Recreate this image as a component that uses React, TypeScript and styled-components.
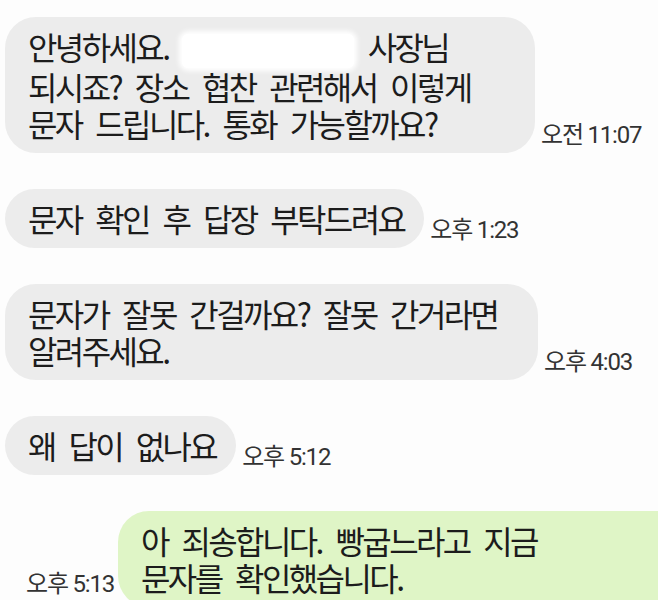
import React from "react";
import styled, { createGlobalStyle } from "styled-components";

const Global = createGlobalStyle`
  html, body { margin: 0; padding: 0; background: #fdfdfd; overflow: hidden; }
  body { font-family: "Noto Sans CJK KR", "Noto Sans", sans-serif; }
`;

const Thread = styled.div`
  display: flex;
  flex-direction: column;
  gap: 36px;
  padding: 17px 0 0 5px;
  width: 658px;
  height: 600px;
  box-sizing: border-box;
  overflow: hidden;
`;

const Row = styled.div<{ $sent?: boolean }>`
  display: flex;
  align-items: flex-end;
  justify-content: ${(p) => (p.$sent ? "flex-end" : "flex-start")};
  margin-right: ${(p) => (p.$sent ? "-40px" : "0")};
`;

const Bubble = styled.div<{ $sent?: boolean; $width?: number }>`
  background: ${(p) => (p.$sent ? "#dff5c6" : "#ececec")};
  color: #1c1c1c;
  border-radius: 31px;
  padding: 11px 20px 11px 23px;
  width: ${(p) => (p.$width ? `${p.$width}px` : "auto")};
  box-sizing: border-box;
  font-size: 32px;
  font-weight: 400;
  line-height: 37px;
  letter-spacing: -2.6px;
  word-spacing: 9px;
  white-space: nowrap;
  flex-shrink: 0;
`;

const Time = styled.span<{ $sent?: boolean }>`
  font-family: "Roboto", "Noto Sans CJK KR", sans-serif;
  font-size: 24px;
  color: #333333;
  letter-spacing: -1.2px;
  white-space: nowrap;
  margin: ${(p) => (p.$sent ? "0 4px 8px 0" : "0 0 3px 6px")};
  flex-shrink: 0;
`;

const Redact = styled.span`
  display: inline-block;
  width: 172px;
  height: 34px;
  vertical-align: -8px;
  background: #ffffff;
  border-radius: 6px;
  box-shadow: 0 0 5px 3px #ffffff;
`;

export default function App() {
  return (
    <>
      <Global />
      <Thread>
        <Row>
          <Bubble $width={530}>
            안녕하세요. <Redact /> 사장님
            <br />
            되시죠? 장소 협찬 관련해서 이렇게
            <br />
            문자 드립니다. 통화 가능할까요?
          </Bubble>
          <Time>오전 11:07</Time>
        </Row>
        <Row>
          <Bubble>문자 확인 후 답장 부탁드려요</Bubble>
          <Time>오후 1:23</Time>
        </Row>
        <Row>
          <Bubble $width={533}>
            문자가 잘못 간걸까요? 잘못 간거라면
            <br />
            알려주세요.
          </Bubble>
          <Time>오후 4:03</Time>
        </Row>
        <Row>
          <Bubble>왜 답이 없나요</Bubble>
          <Time>오후 5:12</Time>
        </Row>
        <Row $sent>
          <Time $sent>오후 5:13</Time>
          <Bubble $sent $width={580}>
            아 죄송합니다. 빵굽느라고 지금
            <br />
            문자를 확인했습니다.
          </Bubble>
        </Row>
      </Thread>
    </>
  );
}
